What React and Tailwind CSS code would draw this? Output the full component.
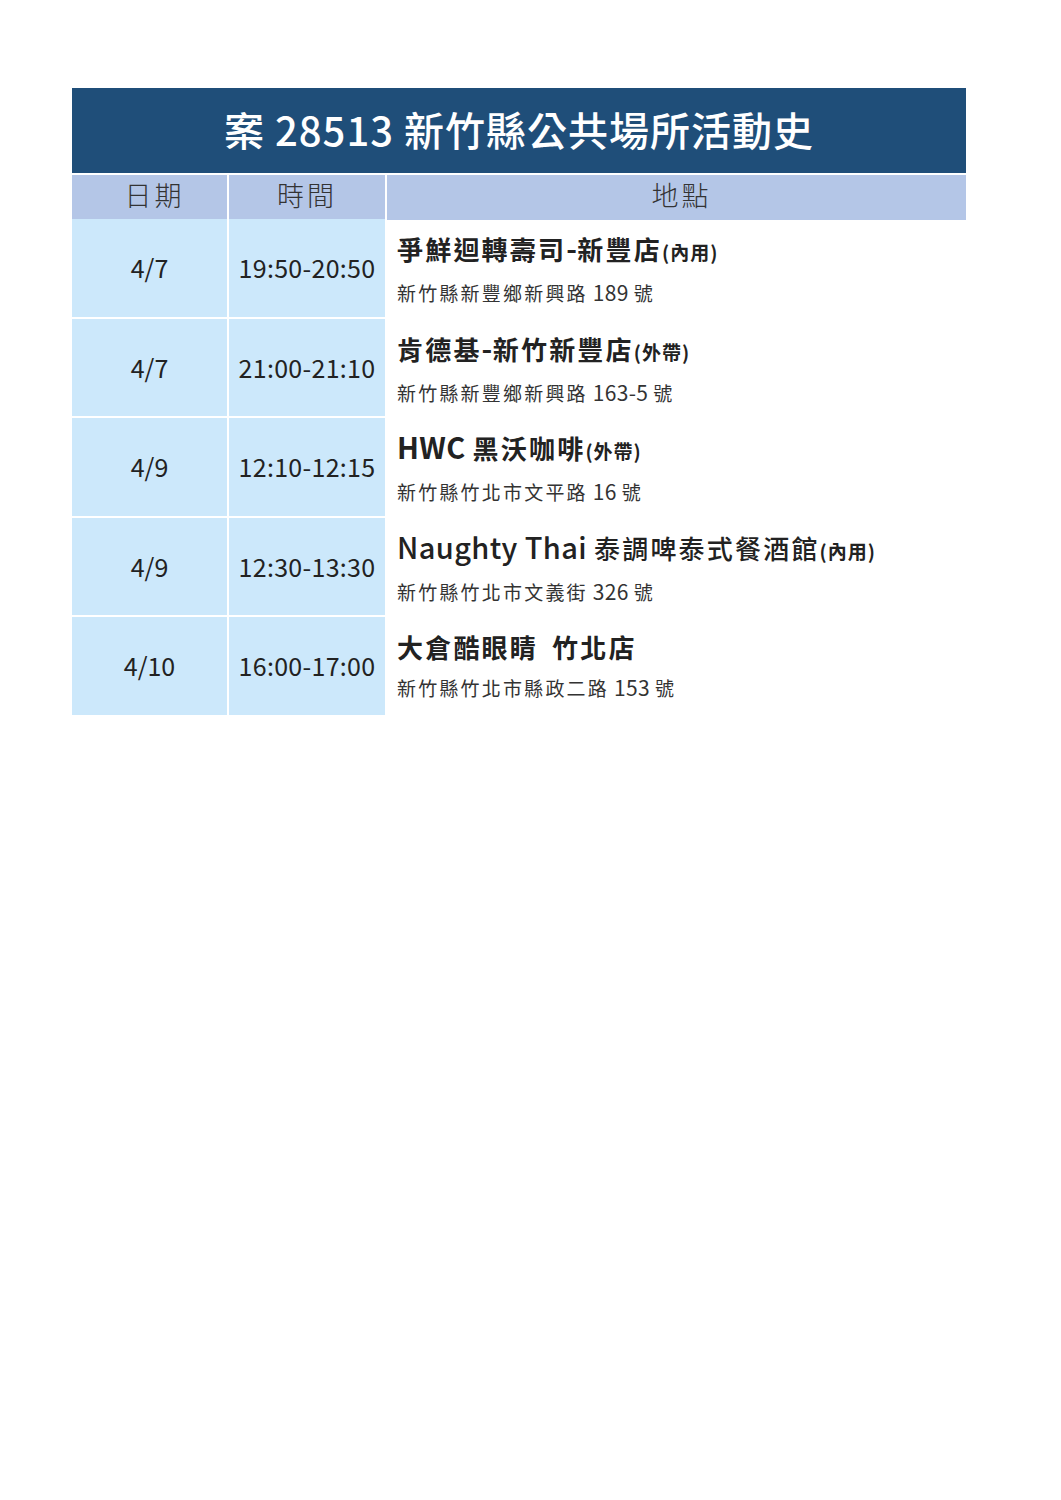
import React from "react";

const rows = [
  { date: "4/7", time: "19:50-20:50", name: "爭鮮迴轉壽司-新豐店", note: "(內用)", addr: "新竹縣新豐鄉新興路 189 號" },
  { date: "4/7", time: "21:00-21:10", name: "肯德基-新竹新豐店", note: "(外帶)", addr: "新竹縣新豐鄉新興路 163-5 號" },
  { date: "4/9", time: "12:10-12:15", name: "HWC 黑沃咖啡", note: "(外帶)", addr: "新竹縣竹北市文平路 16 號" },
  { date: "4/9", time: "12:30-13:30", name: "Naughty Thai 泰調啤泰式餐酒館", note: "(內用)", addr: "新竹縣竹北市文義街 326 號", light: true },
  { date: "4/10", time: "16:00-17:00", name: "大倉酷眼睛  竹北店", note: "", addr: "新竹縣竹北市縣政二路 153 號" },
];

const font = { fontFamily: '"Noto Sans CJK TC", "Noto Sans", sans-serif' };

// latin runs get their own size, CJK runs keep the wide tracking
const Mixed = ({ text, latin }) =>
  text.split(/([\x00-\x7F]+)/).map((part, i) =>
    /^[\x00-\x7F]+$/.test(part) ? (
      <span key={i} className={latin}>{part}</span>
    ) : (
      <span key={i}>{part}</span>
    )
  );

const App = () => {
  return (
    <div className="w-[1061px] h-[1500px] bg-white pt-[88px]" style={font}>
      <div className="ml-[72px] w-[894px]">
        <div className="h-[85px] bg-[#1f4e79] flex items-center justify-center pb-[3px] text-white text-[40px] tracking-[1px] font-medium">
          案 28513 新竹縣公共場所活動史
        </div>
        <div className="grid grid-cols-[155px_156px_579px] gap-x-[2px] mt-[2px] h-[42px] bg-white text-[27px] tracking-[3px] text-[#333] font-light">
          <div className="bg-[#b4c6e7] flex items-center justify-center pb-[4px] pl-[10px]">日期</div>
          <div className="bg-[#b4c6e7] flex items-center justify-center pb-[4px]">時間</div>
          <div className="bg-[#b4c6e7] flex items-center justify-center pb-[4px] pl-[10px]">地點</div>
        </div>
        {rows.map((r, i) => (
          <div key={i} className="grid grid-cols-[155px_156px_579px] gap-x-[2px] mt-[2px] h-[97.5px]">
            <div className="bg-[#cce8fb] flex items-center justify-center text-[25px] text-[#222]">{r.date}</div>
            <div className="bg-[#cce8fb] flex items-center justify-center text-[25px] tracking-[0.3px] text-[#222]">{r.time}</div>
            <div className="pl-[10px] pt-[11px]">
              <div className={`text-[26px] leading-[34px] tracking-[2.2px] whitespace-pre text-[#222] ${r.light ? "font-medium" : "font-bold"}`}>
                <Mixed text={r.name} latin="text-[29px] tracking-[0.4px]" />
                {r.note && <span className="text-[19px] tracking-[1px] font-bold">{r.note}</span>}
              </div>
              <div className="mt-[10px] text-[19px] leading-[26px] tracking-[2.2px] text-[#333]">
                <Mixed text={r.addr} latin="text-[21px] tracking-[0.3px]" />
              </div>
            </div>
          </div>
        ))}
      </div>
    </div>
  );
};

export default App;
